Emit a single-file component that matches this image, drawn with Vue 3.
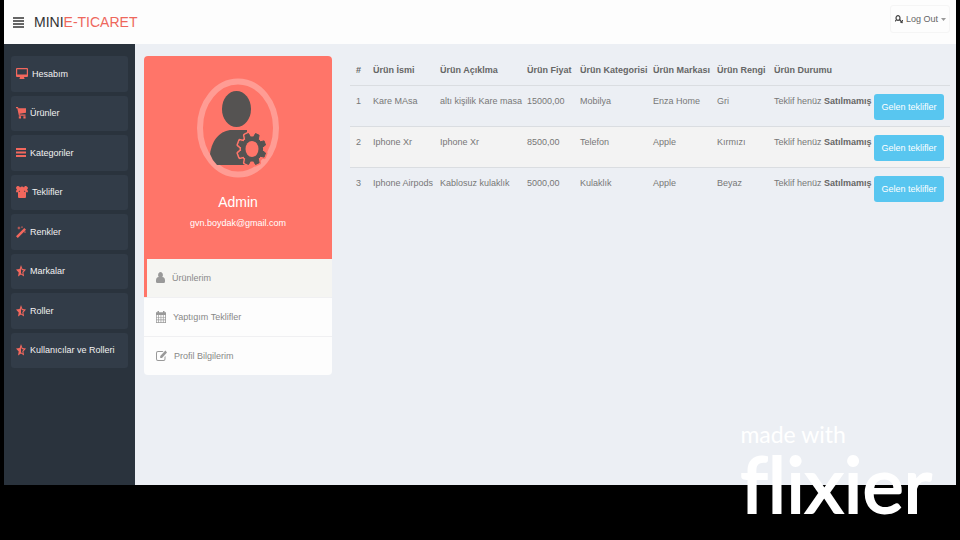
<script setup>
const navItems = [
  { label: 'Hesabım', icon: 'desktop', width: 12 },
  { label: 'Ürünler', icon: 'cart', width: 10 },
  { label: 'Kategoriler', icon: 'bars', width: 10 },
  { label: 'Teklifler', icon: 'group', width: 12 },
  { label: 'Renkler', icon: 'magic', width: 10 },
  { label: 'Markalar', icon: 'star', width: 10 },
  { label: 'Roller', icon: 'star', width: 10 },
  { label: 'Kullanıcılar ve Rolleri', icon: 'star', width: 10 },
]

const navPaths = {
  desktop: 'M1 0h10q1 0 1 1v7q0 1-1 1H8l.6 2H3.400l.6-2H1q-1 0-1-1V1q0-1 1-1zM1.200 1.200v5.300h9.600V1.200z',
  cart: 'M0 0h2l.4 1.200H10v4.600L3.600 6.700l.2.800H9.500v1.200H2.900L1.300 1.200H0zM2.800 9.200h2.200v2.200H2.800zM7.400 9.200h2.200v2.200H7.400z',
  bars: 'M0 1h10v2H0zM0 4.500h10v2H0zM0 8h10v2H0z',
  group: 'M2.300 0A1.900 1.900 0 0 1 4 1.400a2.600 2.600 0 0 1 4 0A1.900 1.900 0 1 1 11 3.500q1 .5 1 2.700h-2V11q0 1-1 1H3q-1 0-1-1V6.200H0q0-2.200 1-2.700A1.900 1.900 0 0 1 2.300 0zM3.200 4.600L2.600 6l1.600-.6zM8.800 4.600L9.400 6l-1.600-.6z',
  magic: 'M8.300 2 10 3.800 1.800 12 0 10.200zM3 0l.4 1.400L4.800 2l-1.400.5L3 4l-.5-1.500L1 2l1.500-.6zM6 0l.3.800.8.300-.8.300L6 2.200l-.3-.8-.8-.3.800-.3zM9 5l.3.800.7.300-.7.300L9 7.200l-.3-.8-.8-.3.800-.3z',
  star: 'M5 0v9.400L2 11.600l.7-4L0 4.600l3.600-.6zM5 0l1.500 4L10 4.600 7.400 7.500l.7 4.100L5 9.500V8.300l1.700 1.100-.4-2.300 1.500-1.700-2-.4L5 3z',
}

const profileLinks = [
  { label: 'Ürünlerim', icon: 'user', width: 9, active: true },
  { label: 'Yaptıgım Teklifler', icon: 'calendar', width: 10 },
  { label: 'Profil Bilgilerim', icon: 'edit', width: 11 },
]

const profilePaths = {
  user: 'M4.500 0a2.500 3 0 0 1 1.800 5Q9 5 9 8.600V9.500q0 1.500-1.300 1.500H1.300Q0 11 0 9.500V8.600Q0 5 2.700 5a2.500 3 0 0 1 1.800-5z',
  calendar: 'M1.500 0H3v1.200h4V0h1.500v1.200H10V12H0V1.200h1.500zM.7 4v1.900h1.600V4zM3 4v1.900h1.600V4zM5.300 4v1.900h1.600V4zM7.600 4v1.900h1.600V4zM.7 6.600v1.900h1.600V6.600zM3 6.600v1.900h1.600V6.600zM5.300 6.600v1.900h1.600V6.600zM7.600 6.600v1.900h1.600V6.600zM.7 9.200v2h1.600v-2zM3 9.200v2h1.600v-2zM5.300 9.200v2h1.600v-2zM7.600 9.200v2h1.600v-2z',
  edit: 'M2 1h5.500l-.9 1H2Q1 2 1 3v6q0 1 1 1h5.500q1 0 1-1V7l1-1v3q0 2-2 2H2Q0 11 0 9V3Q0 1 2 1zM9.400.6 11 2.400 6 8H4.200V6z',
}

const headings = ['#', 'Ürün İsmi', 'Ürün Açıklma', 'Ürün Fiyat', 'Ürün Kategorisi', 'Ürün Markası', 'Ürün Rengi', 'Ürün Durumu']

const products = [
  { id: 1, name: 'Kare MAsa', description: 'altı kişilik Kare masa', price: '15000,00', category: 'Mobilya', brand: 'Enza Home', color: 'Gri' },
  { id: 2, name: 'Iphone Xr', description: 'Iphone Xr', price: '8500,00', category: 'Telefon', brand: 'Apple', color: 'Kırmızı' },
  { id: 3, name: 'Iphone Airpods', description: 'Kablosuz kulaklık', price: '5000,00', category: 'Kulaklık', brand: 'Apple', color: 'Beyaz' },
]

// Gear outline: eight trapezoid teeth around an elliptical body.
function gearPath(cx, cy, rx, ry) {
  const points = []
  const steps = [[-14, 0.76], [-8, 1], [8, 1], [14, 0.76]]
  for (let tooth = 0; tooth < 8; tooth++) {
    for (const [offset, scale] of steps) {
      const angle = ((tooth * 45 + 22.5 + offset) * Math.PI) / 180
      points.push(`${(cx + rx * scale * Math.cos(angle)).toFixed(2)} ${(cy + ry * scale * Math.sin(angle)).toFixed(2)}`)
    }
  }
  return `M${points.join('L')}Z`
}
const gear = gearPath(55, 71, 14, 16)
</script>

<template>
  <div class="frame">
    <header class="topbar">
      <button class="toggle" type="button" aria-label="Menu">
        <svg width="11" height="11" viewBox="0 0 11 11"><path d="M0 0h11v2H0zM0 3h11v2H0zM0 6h11v2H0zM0 9h11v2H0z" /></svg>
      </button>
      <a class="brand" href="#">MINI<span>E-TICARET</span></a>
      <button class="logout" type="button">
        <svg width="8" height="9" viewBox="0 0 8 9">
          <ellipse cx="3" cy="3" rx="2" ry="2.300" fill="none" stroke="currentColor" stroke-width="1.200" />
          <path d="M1.600 4.500 0 6.500M4.500 4.500 7.500 8M6 6.300v1.800M7.500 5v1.500" fill="none" stroke="currentColor" stroke-width="1.200" />
        </svg>
        <span>Log Out</span>
        <svg class="caret" width="5" height="3" viewBox="0 0 5 3"><path d="M0 0h5L2.500 3z" /></svg>
      </button>
    </header>

    <div class="body">
      <nav class="sidebar">
        <ul>
          <li v-for="item in navItems" :key="item.label">
            <a href="#">
              <svg :width="item.width" height="12" :viewBox="`0 0 ${item.width} 12`">
                <path :d="navPaths[item.icon]" fill-rule="evenodd" />
              </svg>
              <span>{{ item.label }}</span>
            </a>
          </li>
        </ul>
      </nav>

      <main class="content">
        <aside class="profile">
          <div class="hero">
            <svg class="avatar" width="82" height="100" viewBox="0 0 82 100">
              <ellipse cx="41" cy="50" rx="38" ry="46.500" fill="none" stroke="#ff9c94" stroke-width="6" />
              <ellipse cx="39.500" cy="31" rx="14.500" ry="18" fill="#555352" />
              <path d="M20 87Q15 82 13 76C15 61 24 52 35 52H50V87Z" fill="#555352" />
              <path :d="gear" fill="#555352" stroke="#ff7569" stroke-width="4" stroke-linejoin="round" />
              <path :d="gear" fill="#555352" stroke="#555352" stroke-width="1" stroke-linejoin="round" />
              <ellipse cx="55" cy="71" rx="6.500" ry="8" fill="#ff7569" />
            </svg>
            <h1>Admin</h1>
            <p>gvn.boydak@gmail.com</p>
          </div>
          <ul class="links">
            <li v-for="link in profileLinks" :key="link.label" :class="{ active: link.active }">
              <a href="#">
                <svg :width="link.width" height="12" :viewBox="`0 0 ${link.width} 12`">
                  <path :d="profilePaths[link.icon]" fill-rule="evenodd" />
                </svg>
                <span>{{ link.label }}</span>
              </a>
            </li>
          </ul>
        </aside>

        <section class="products">
          <table>
            <colgroup>
              <col class="c-id" /><col class="c-name" /><col class="c-desc" /><col class="c-price" /><col class="c-cat" />
              <col class="c-brand" /><col class="c-color" /><col class="c-state" /><col />
            </colgroup>
            <thead>
              <tr>
                <th v-for="heading in headings" :key="heading" scope="col">{{ heading }}</th>
                <td></td>
              </tr>
            </thead>
            <tbody>
              <tr v-for="product in products" :key="product.id">
                <td>{{ product.id }}</td>
                <td>{{ product.name }}</td>
                <td>{{ product.description }}</td>
                <td>{{ product.price }}</td>
                <td>{{ product.category }}</td>
                <td>{{ product.brand }}</td>
                <td>{{ product.color }}</td>
                <td>Teklif henüz <b>Satılmamış</b></td>
                <td class="action"><button type="button">Gelen teklifler</button></td>
              </tr>
            </tbody>
          </table>
        </section>
      </main>
    </div>

    <div class="watermark">
      <span class="made">made with</span>
      <span class="name">flixier</span>
    </div>
  </div>
</template>

<style>
body {
  background: #000;
}
</style>

<style scoped>
.frame {
  position: relative;
  display: flex;
  flex-direction: column;
  box-sizing: border-box;
  min-height: 100vh;
  padding: 0 4px 55px;
  font-family: "Liberation Sans", Arial, sans-serif;
  font-size: 9px;
  line-height: 14px;
  color: #777;
}
ul {
  margin: 0;
  padding: 0;
  list-style: none;
}
a {
  color: inherit;
  text-decoration: none;
}
button {
  font: inherit;
  cursor: pointer;
}
svg {
  flex: none;
  fill: currentColor;
}
.topbar {
  display: flex;
  align-items: center;
  height: 44px;
  padding: 0 6px 0 9px;
  background: #fdfdfd;
}
.toggle {
  display: flex;
  padding: 0;
  border: 0;
  background: none;
  color: #666;
}
.brand {
  margin-left: 10px;
  font-size: 14px;
  line-height: 20px;
  color: #333;
}
.brand span {
  color: #ee675c;
}
.logout {
  display: flex;
  align-items: center;
  gap: 3px;
  height: 28px;
  margin: 0 0 6px auto;
  padding: 0 3px 0 4px;
  border: 1px solid #f5f5f5;
  border-radius: 3px;
  background: #fdfdfd;
  color: #444;
}
.logout span {
  color: #666;
}
.caret {
  color: #999;
}
.body {
  display: flex;
  flex: 1;
  background: #eceff4;
}
.sidebar {
  flex: none;
  box-sizing: border-box;
  width: 131px;
  padding: 12px 7px;
  background: #2a333d;
}
.sidebar ul {
  display: grid;
  grid-template-rows: repeat(8, 1fr);
  gap: 4px;
  height: 312px;
}
.sidebar a {
  display: flex;
  align-items: center;
  gap: 4px;
  box-sizing: border-box;
  height: 100%;
  padding-left: 5px;
  border-radius: 3px;
  background: #323c48;
  color: #f2f2f2;
}
.sidebar svg {
  color: #f2675d;
}
.content {
  display: flex;
  flex: 1;
  align-items: flex-start;
  gap: 18px;
  min-width: 0;
  padding: 12px 6px 12px 9px;
}
.profile {
  flex: none;
  width: 188px;
  overflow: hidden;
  border-radius: 4px;
  background: #fdfdfd;
}
.hero {
  display: flex;
  flex-direction: column;
  align-items: center;
  padding: 22px 0 29px;
  background: #ff7569;
  color: #fff;
}
.hero h1 {
  margin: 14px 0 4px;
  font-size: 14px;
  font-weight: 400;
  line-height: 20px;
}
.hero p {
  margin: 0;
}
.links a {
  display: flex;
  align-items: center;
  gap: 7px;
  height: 38px;
  padding-left: 12px;
  border-top: 1px solid #f0f0f2;
  color: #888;
}
.links li:first-child a {
  border-top: 0;
}
.links .active a {
  padding-left: 9px;
  border-left: 3px solid #ff7569;
  background: #f5f5f2;
}
.links svg {
  color: #999;
}
.products {
  flex: 1;
  min-width: 0;
}
table {
  width: 100%;
  table-layout: fixed;
  border-collapse: separate;
  border-spacing: 0;
}
.c-id { width: 17px; }
.c-name { width: 67px; }
.c-desc { width: 87px; }
.c-price { width: 53px; }
.c-cat { width: 73px; }
.c-brand { width: 64px; }
.c-color { width: 57px; }
.c-state { width: 100px; }
th,
td {
  padding: 8px 0 6px 6px;
  border-bottom: 1px solid #dadde1;
  text-align: left;
  vertical-align: top;
  white-space: nowrap;
}
th {
  color: #666;
}
thead th,
thead td {
  padding-top: 7px;
  padding-bottom: 8px;
}
tbody tr:nth-child(even) td {
  background: #f3f3f3;
}
tbody tr:last-child td {
  border-bottom: 0;
}
td b {
  color: #666;
}
.action button {
  display: block;
  width: 70px;
  height: 26px;
  padding: 0;
  border: 0;
  border-radius: 3px;
  background: #58c6f0;
  color: #fff;
}
.watermark {
  position: absolute;
  right: 28px;
  bottom: 21px;
  display: flex;
  flex-direction: column;
  color: #fff;
  font-family: Lato, "Open Sans", sans-serif;
  font-variant-ligatures: none;
  pointer-events: none;
}
.made {
  font-size: 23px;
  line-height: 26px;
}
.name {
  font-size: 78px;
  line-height: 72px;
  -webkit-text-stroke: 2px #fff;
  stroke-linejoin: round;
}
</style>
